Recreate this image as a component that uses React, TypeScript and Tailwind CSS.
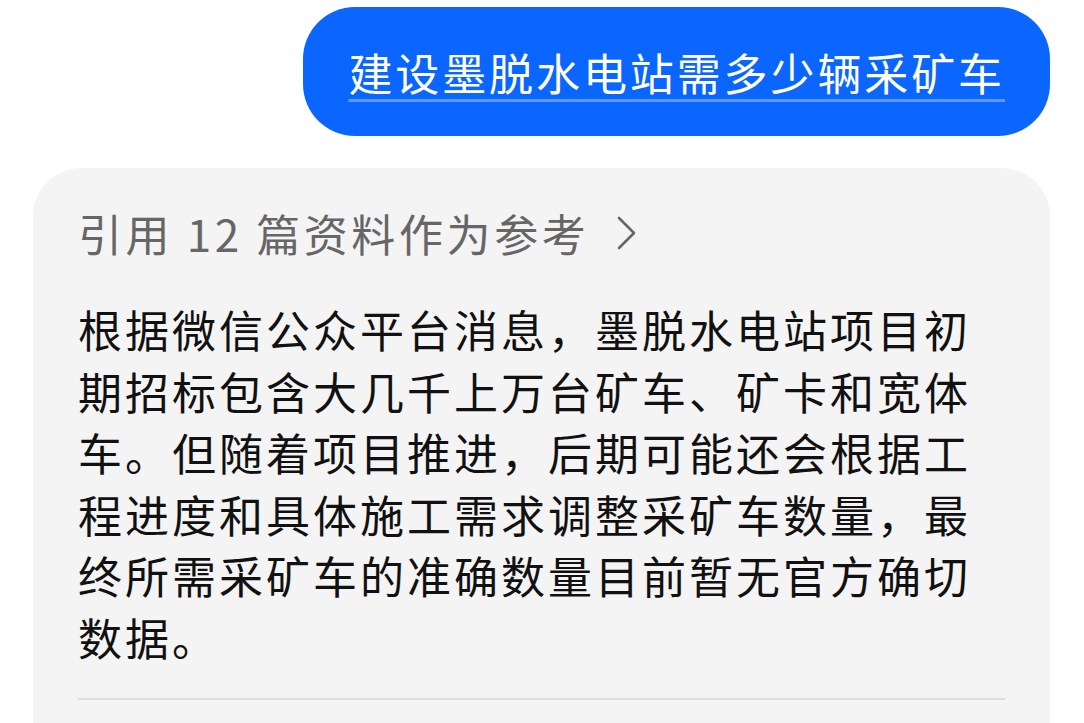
import React from "react";

const font = "font-['Noto_Sans_CJK_SC','Noto_Sans',sans-serif]";

export default function App() {
  return (
    <div className={`min-h-[723px] w-full bg-white ${font}`}>
      {/* Question bubble */}
      <div className="flex justify-end pt-[7px] pr-[34px]">
        <div className="flex h-[129px] items-center rounded-[52px] bg-[#0a66ff] pl-[45px] pr-[45px]">
          <span className="text-[44px] leading-none tracking-[2.9px] text-white underline decoration-[#5d9cff] decoration-[3px] underline-offset-[8px]">
            建设墨脱水电站需多少辆采矿车
          </span>
        </div>
      </div>

      {/* Answer card */}
      <div className="ml-[33px] mr-[34px] mt-[32px] rounded-t-[48px] bg-[#f4f4f4] px-[45px] pt-[35px] pb-[40px]">
        <div className="flex items-center text-[44px] leading-[60px] tracking-[3.6px] text-[#666666]">
          <span>引用 12 篇资料作为参考</span>
          <svg className="ml-[27px]" width="22" height="36" viewBox="0 0 22 36" fill="none">
            <polyline points="3,3 18,18 3,33" stroke="#666666" strokeWidth="2.6" strokeLinecap="round" strokeLinejoin="round" />
          </svg>
        </div>

        <p className="mt-[36px] text-[44px] leading-[61.6px] tracking-[3px] text-[#111111]">
          根据微信公众平台消息，墨脱水电站项目初期招标包含大几千上万台矿车、矿卡和宽体车。但随着项目推进，后期可能还会根据工程进度和具体施工需求调整采矿车数量，最终所需采矿车的准确数量目前暂无官方确切数据。
        </p>

        <div className="mt-[29px] h-[2px] bg-[#dddddd]" />
      </div>
    </div>
  );
}
